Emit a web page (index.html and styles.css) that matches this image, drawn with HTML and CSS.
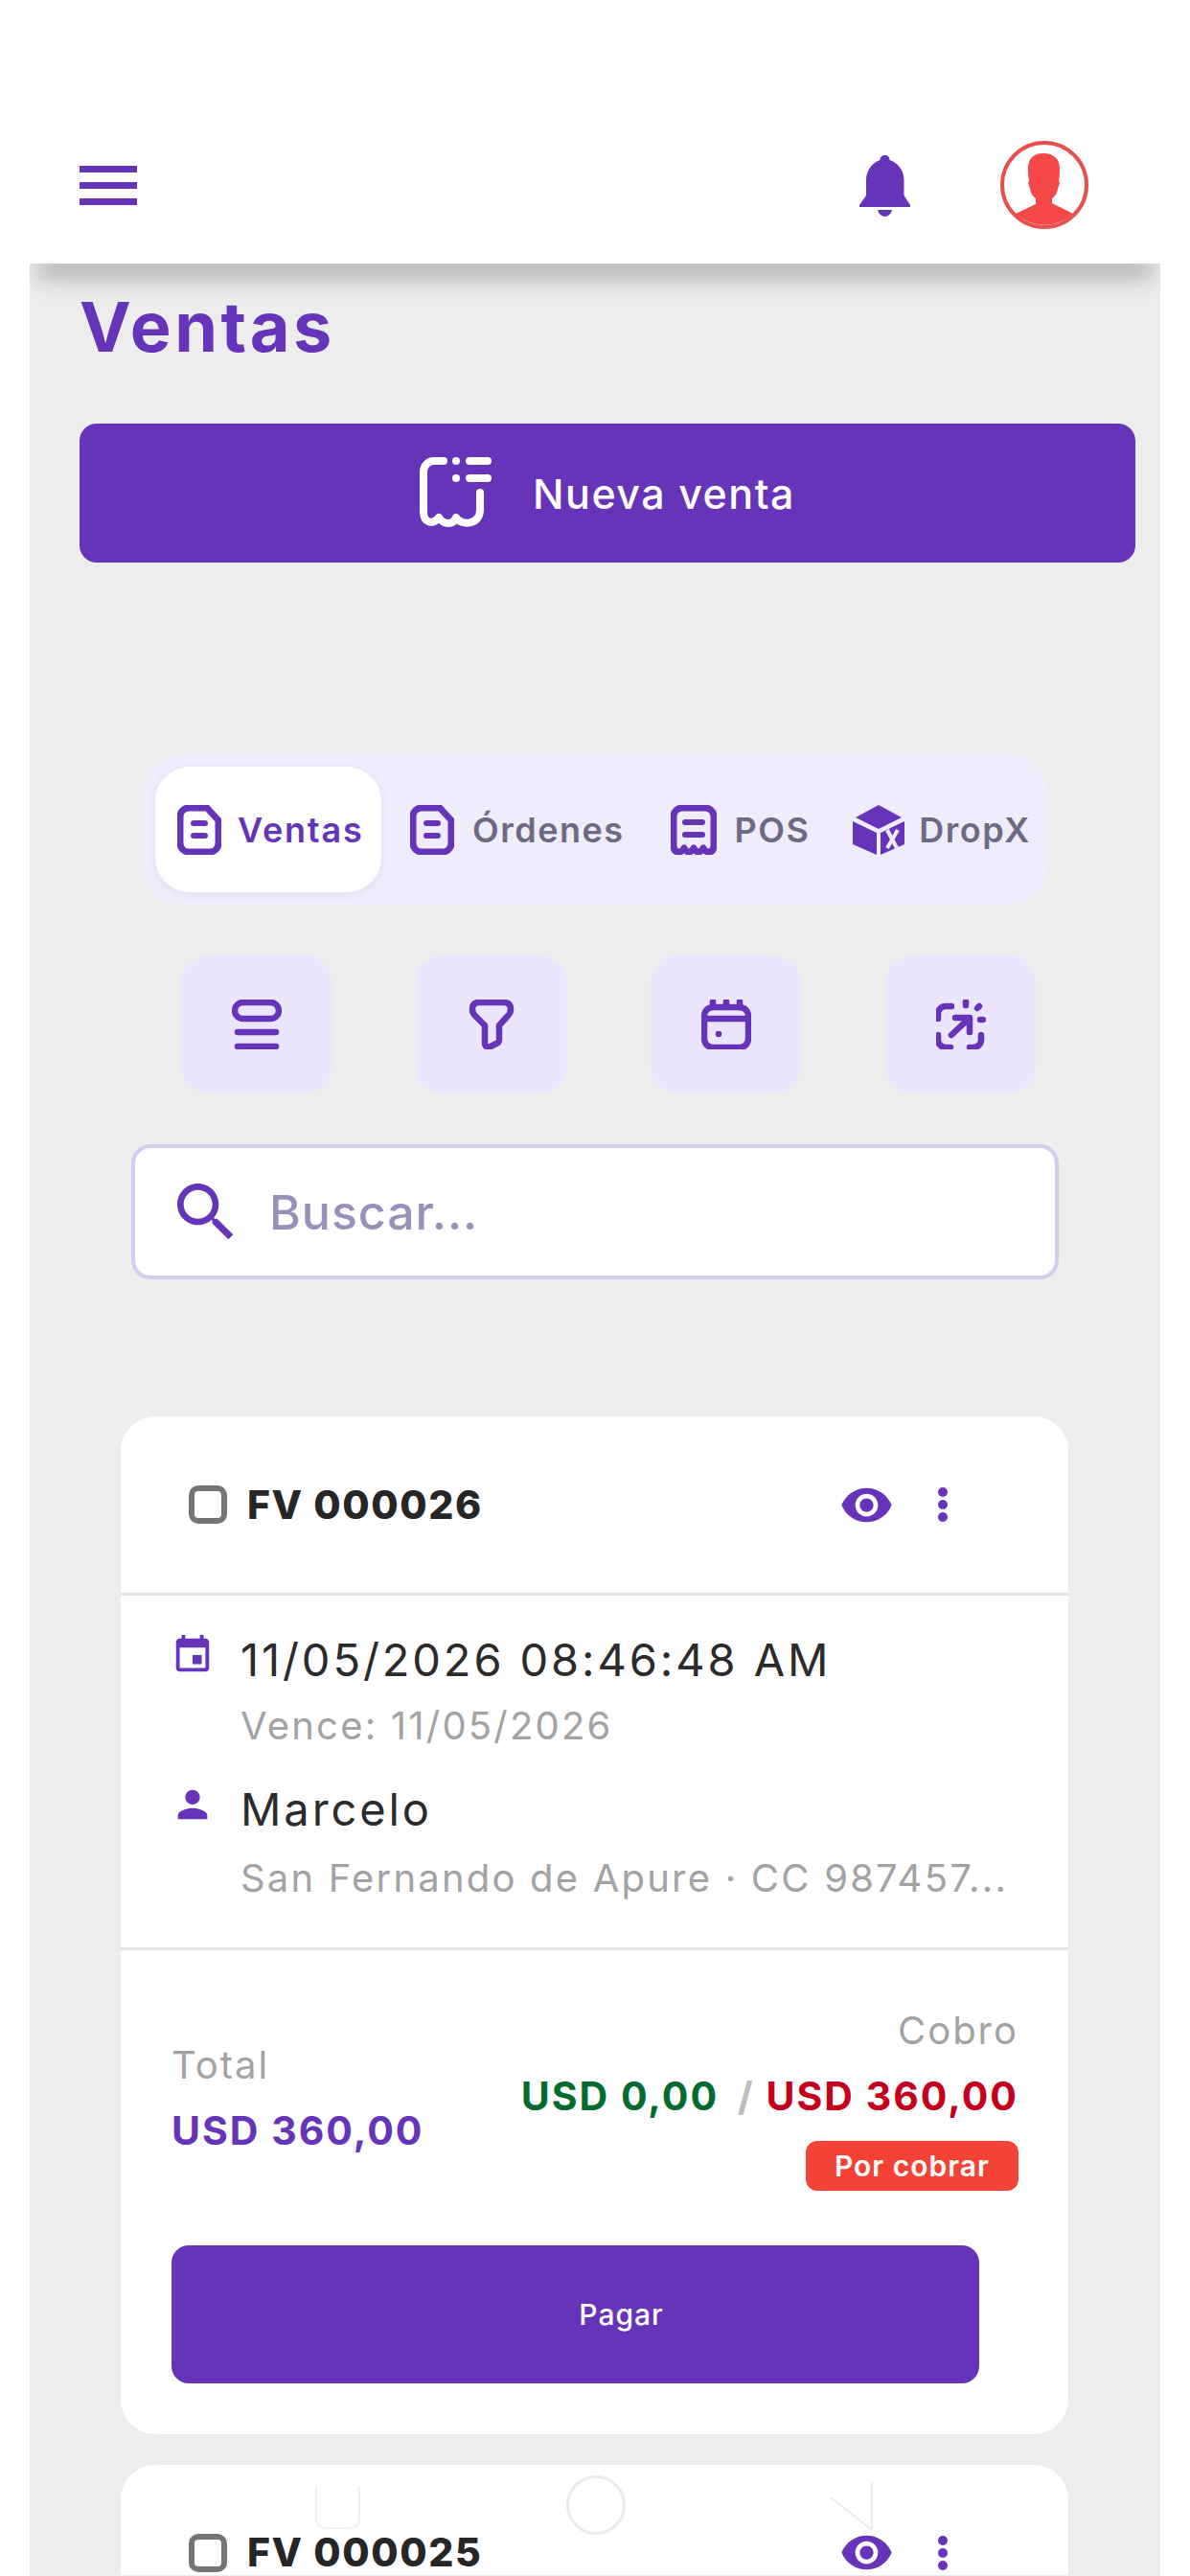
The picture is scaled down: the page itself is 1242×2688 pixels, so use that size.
FILE: index.html
```html
<!DOCTYPE html>
<html lang="es">
<head>
  <meta charset="UTF-8" />
  <meta name="viewport" content="width=device-width, initial-scale=1.0" />
  <title>Ventas</title>
  <link rel="stylesheet" href="styles.css">
</head>
<body>
  <header class="topbar">
    <div class="burger"><span></span><span></span><span></span></div>
    <svg class="bell" viewBox="0 0 53 64"><path d="M26.5 0c3 0 5 2 5 5 9 3 15 11 15 21v16l6.500 10v2H0v-2l7-10V26C7 16 13 8 21.500 5c0-3 2-5 5-5z"/><path d="M19 57h15c-1 4-4 7-7.500 7S20 61 19 57z"/></svg>
    <svg class="avatar" viewBox="0 0 92 92">
      <circle class="avatar-ring" cx="46" cy="46" r="44"/>
      <path class="avatar-man" d="M45 13c11 0 17 6 17 16 0 4 0 8-1 12l1 3-2 6c-1 5-3 8-6 10v5l22 11A44 44 0 0 1 16 76l21-10v-6c-3-2-5-5-6-10l-2-6 1-3c-1-4-1-8-1-12 0-10 5-16 16-16z"/>
    </svg>
  </header>

  <main class="page">
    <div class="bar-shade"></div>
    <h1 class="page-title">Ventas</h1>
    <button class="new-sale">
      <svg class="new-sale-icon" viewBox="0 0 77 75"><path d="M25 5H15A11 11 0 0 0 4 16V58C4 70 14 72 20 64C25 72 35 72 38 64C43 73 63 72 63 56V38"/><path d="M38 5h.01M38 23h.01M52 5h19M52 23h19"/></svg>
      <span>Nueva venta</span>
    </button>

    <nav class="tabs">
      <div class="tab active">
        <svg class="tab-icon" viewBox="0 0 46 52"><path d="M12 3h19l12 13v24a9 9 0 0 1-9 9H12a9 9 0 0 1-9-9V12a9 9 0 0 1 9-9z"/><path class="tab-lines" d="M17 19h12M17 32h12"/></svg>
        <span>Ventas</span>
      </div>
      <div class="tab">
        <svg class="tab-icon" viewBox="0 0 46 52"><path d="M12 3h19l12 13v24a9 9 0 0 1-9 9H12a9 9 0 0 1-9-9V12a9 9 0 0 1 9-9z"/><path class="tab-lines" d="M17 19h12M17 32h12"/></svg>
        <span>Órdenes</span>
      </div>
      <div class="tab">
        <svg class="tab-icon pos" viewBox="0 0 48 52"><path d="M3 12a9 9 0 0 1 9-9h24a9 9 0 0 1 9 9v30Q45 49 39 49 36 49 34 45 32 49 29 49 26 49 24 45 22 49 19 49 16 49 14 45 12 49 9 49 3 49 3 42z"/><path class="tab-lines" d="M15 18h18M15 31h18"/></svg>
        <span>POS</span>
      </div>
      <div class="tab drop">
        <svg class="tab-icon cube" viewBox="0 0 54 52">
          <path d="M27 0l24 13-24 12L3 13zM0 17l25 12v23L0 41zM29 29l25-12v24L29 52z"/>
          <path class="cube-x" d="M36 45l11-19M36 26l10 19"/>
        </svg>
        <span>DropX</span>
      </div>
    </nav>

    <div class="tools">
      <button class="tool"><svg viewBox="0 0 52 52"><rect x="3" y="3" width="46" height="17" rx="8.500"/><path d="M6 34h40M6 49h40"/></svg></button>
      <button class="tool"><svg viewBox="0 0 52 52"><path d="M13 3h26q7 0 7 7 0 4-3 7l-9 10v15q0 3-3 4l-6 3q-6 2-6-4V27L9 17q-3-3-3-7 0-7 7-7z"/></svg></button>
      <button class="tool"><svg viewBox="0 0 52 52"><rect x="3" y="8" width="46" height="42" rx="9"/><path d="M3 20h46M12 2v6M26 2v6M40 2v6M18 36h.01"/></svg></button>
      <button class="tool"><svg viewBox="0 0 52 52"><path d="M16 7h-6a8 8 0 0 0-8 8v5M2 37v5a8 8 0 0 0 8 8h5M35 50h4a8 8 0 0 0 8-8v-5M31 2v4M43 9l2-2M46 21h3M16 37l18-17M20 19h15v15"/></svg></button>
    </div>

    <div class="search">
      <svg class="search-icon" viewBox="0 0 24 24"><path d="M15.500 14h-.79l-.28-.27C15.410 12.590 16 11.110 16 9.500 16 5.910 13.090 3 9.500 3S3 5.910 3 9.500 5.910 16 9.500 16c1.610 0 3.090-.59 4.230-1.570l.27.28v.79l5 4.990L20.490 19l-4.990-5zm-6 0C7.010 14 5 11.990 5 9.500S7.010 5 9.500 5 14 7.010 14 9.500 11.990 14 9.500 14z"/></svg>
      <input type="text" placeholder="Buscar...">
    </div>

    <article class="card">
      <div class="card-head">
        <span class="check"></span>
        <span class="doc-number">FV 000026</span>
        <svg class="eye" viewBox="0 0 24 24"><path d="M12 4.500C7 4.500 2.730 7.610 1 12c1.730 4.390 6 7.500 11 7.500s9.270-3.110 11-7.500c-1.730-4.390-6-7.500-11-7.500zM12 17c-2.760 0-5-2.240-5-5s2.240-5 5-5 5 2.240 5 5-2.240 5-5 5zm0-8c-1.660 0-3 1.340-3 3s1.340 3 3 3 3-1.340 3-3-1.340-3-3-3z"/></svg>
        <svg class="more" viewBox="0 0 10 36"><circle cx="5" cy="5" r="5"/><circle cx="5" cy="18" r="5"/><circle cx="5" cy="31" r="5"/></svg>
      </div>
      <div class="card-info">
        <div class="info-row">
          <svg class="info-icon" viewBox="0 0 24 24"><path d="M17 12h-5v5h5v-5zM16 1v2H8V1H6v2H5c-1.110 0-1.990.9-1.990 2L3 19c0 1.100.89 2 2 2h14c1.100 0 2-.9 2-2V5c0-1.100-.9-2-2-2h-1V1h-2zm3 18H5V8h14v11z"/></svg>
          <div>
            <div class="info-main">11/05/2026 08:46:48 AM</div>
            <div class="info-sub">Vence: 11/05/2026</div>
          </div>
        </div>
        <div class="info-row customer">
          <svg class="info-icon" viewBox="0 0 24 24"><path d="M12 12c2.210 0 4-1.790 4-4s-1.790-4-4-4-4 1.790-4 4 1.790 4 4 4zm0 2c-2.670 0-8 1.340-8 4v2h16v-2c0-2.660-5.330-4-8-4z"/></svg>
          <div>
            <div class="info-main">Marcelo</div>
            <div class="info-sub">San Fernando de Apure · CC 987457...</div>
          </div>
        </div>
      </div>
      <div class="card-foot">
        <div class="amounts">
          <div>
            <div class="label">Total</div>
            <div class="money total">USD 360,00</div>
          </div>
          <div class="collect">
            <div class="label">Cobro</div>
            <div class="money"><span class="paid">USD 0,00</span> <span class="slash">/</span> <span class="due">USD 360,00</span></div>
            <span class="badge">Por cobrar</span>
          </div>
        </div>
        <button class="pay">Pagar</button>
      </div>
    </article>

    <article class="card">
      <div class="card-head">
        <span class="check"></span>
        <span class="doc-number">FV 000025</span>
        <svg class="eye" viewBox="0 0 24 24"><path d="M12 4.500C7 4.500 2.730 7.610 1 12c1.730 4.390 6 7.500 11 7.500s9.270-3.110 11-7.500c-1.730-4.390-6-7.500-11-7.500zM12 17c-2.760 0-5-2.240-5-5s2.240-5 5-5 5 2.240 5 5-2.240 5-5 5zm0-8c-1.660 0-3 1.340-3 3s1.340 3 3 3 3-1.340 3-3-1.340-3-3-3z"/></svg>
        <svg class="more" viewBox="0 0 10 36"><circle cx="5" cy="5" r="5"/><circle cx="5" cy="18" r="5"/><circle cx="5" cy="31" r="5"/></svg>
      </div>
    </article>
  </main>

  <!-- faint system navigation keys lying over the page -->
  <div class="sys-nav">
    <span class="sys-square"></span>
    <span class="sys-circle"></span>
    <svg class="sys-back" viewBox="0 0 46 52"><path d="M45 0v50L2 16"/></svg>
  </div>
</body>
</html>
```

FILE: styles.css
```css
* {
  box-sizing: border-box;
  margin: 0;
  padding: 0;
}
html, body {
  height: 2688px;
  overflow: hidden;
}
body {
  position: relative;
  font-family: 'Inter', 'Noto Sans', sans-serif;
  background: #fff;
  color: #2b2b2b;
}
button {
  font-family: inherit;
  border: none;
}
svg {
  display: block;
  flex: none;
}

/* top bar */
.topbar {
  height: 275px;
  padding: 147px 106px 0 83px;
  display: flex;
  align-items: flex-start;
}
.burger {
  width: 60px;
  margin-top: 26px;
  margin-right: auto;
  display: flex;
  flex-direction: column;
  gap: 10px;
}
.burger span {
  height: 7px;
  background: #6534b8;
}
.bell {
  width: 53px;
  height: 64px;
  margin-top: 15px;
  margin-right: 94px;
  fill: #6534b8;
}
.avatar {
  width: 92px;
  height: 92px;
}
.avatar-ring {
  fill: #fff;
  stroke: #e8504f;
  stroke-width: 4;
}
.avatar-man {
  fill: #f44848;
}

/* page */
.page {
  margin: 0 31px;
  height: 2413px;
  background: #ededee;
  overflow: hidden;
}
.bar-shade {
  height: 0;
  margin: 0 14px;
  box-shadow: 0 4px 26px 6px rgba(0, 0, 0, 0.5);
}
.page-title {
  margin: 24px 0 59px 52px;
  font-size: 72px;
  line-height: 84px;
  font-weight: 700;
  letter-spacing: 3.500px;
  color: #6534b8;
}
.new-sale {
  width: 1102px;
  height: 145px;
  margin-left: 52px;
  display: flex;
  align-items: center;
  justify-content: center;
  gap: 41px;
  background: #6534b8;
  color: #fff;
  border-radius: 18px;
  font-size: 43px;
  font-weight: 500;
  letter-spacing: 1.500px;
}
.new-sale-icon {
  width: 77px;
  height: 75px;
  margin-bottom: 2px;
  fill: none;
  stroke: #fff;
  stroke-width: 8;
  stroke-linecap: round;
  stroke-linejoin: round;
}

/* tabs */
.tabs {
  width: 944px;
  height: 157px;
  margin: 200px 0 0 118px;
  padding: 13px;
  display: flex;
  gap: 26px;
  background: #efecfb;
  border-radius: 40px;
}
.tab {
  flex: none;
  height: 131px;
  padding: 0 11px;
  display: flex;
  align-items: center;
  gap: 19px;
  font-size: 36px;
  font-weight: 600;
  letter-spacing: 1.500px;
  color: #6e6a85;
}
.tab.active {
  width: 236px;
  margin-right: -7px;
  padding: 0 0 0 23px;
  gap: 17px;
  background: #fff;
  border-radius: 36px;
  color: #6534b8;
  letter-spacing: 1.800px;
  box-shadow: 0 2px 8px rgba(101, 52, 184, 0.08);
}
.tab.drop {
  margin-left: -3px;
  gap: 15px;
}
.tab-icon {
  width: 46px;
  height: 52px;
  fill: none;
  stroke: #6534b8;
  stroke-width: 7;
  stroke-linejoin: round;
}
.tab-icon.pos {
  width: 48px;
}
.tab-icon.cube {
  width: 54px;
  fill: #6534b8;
  stroke: none;
}
.tab-lines {
  stroke-width: 6;
  stroke-linecap: round;
}
.cube-x {
  fill: none;
  stroke: #efecfb;
  stroke-width: 4;
}

/* tool buttons */
.tools {
  margin: 53px 0 0 158px;
  display: flex;
  gap: 88px;
}
.tool {
  width: 157px;
  height: 144px;
  display: flex;
  align-items: center;
  justify-content: center;
  background: #ebe6fd;
  border-radius: 28px;
}
.tool svg {
  width: 52px;
  height: 52px;
  fill: none;
  stroke: #6534b8;
  stroke-width: 6.500;
  stroke-linecap: round;
  stroke-linejoin: round;
}

/* search */
.search {
  width: 968px;
  height: 141px;
  margin: 53px 0 0 106px;
  padding-left: 34px;
  display: flex;
  align-items: center;
  gap: 26px;
  background: #fff;
  border: 4px solid #d4cbf0;
  border-radius: 20px;
}
.search-icon {
  width: 80px;
  height: 80px;
  fill: #6534b8;
}
.search input {
  flex: 1;
  min-width: 0;
  border: none;
  outline: none;
  background: transparent;
  font-family: inherit;
  font-size: 50px;
  font-weight: 500;
  letter-spacing: 1px;
}
.search input::placeholder {
  color: #9a8fbb;
  opacity: 1;
}

/* cards */
.card {
  width: 989px;
  margin: 143px 0 0 95px;
  background: #fff;
  border-radius: 36px;
}
.card + .card {
  margin-top: 32px;
  height: 115px;
  border-radius: 36px 36px 0 0;
}
.card-head {
  height: 187px;
  padding: 0 0 0 71px;
  display: flex;
  align-items: center;
  border-bottom: 3px solid #e4e4e4;
}
/* second card runs off the bottom of the screen */
.card + .card .card-head {
  height: 115px;
  padding-top: 68px;
  border-bottom: none;
}
.check {
  width: 40px;
  height: 40px;
  margin-right: 21px;
  border: 6px solid #757575;
  border-radius: 10px;
}
.doc-number {
  font-size: 41px;
  line-height: 41px;
  font-weight: 800;
  letter-spacing: 1.600px;
  color: #262626;
  margin-right: auto;
}
.eye {
  width: 57px;
  height: 57px;
  margin-right: 46px;
  fill: #6534b8;
}
.more {
  width: 10px;
  height: 36px;
  margin-right: 126px;
  fill: #6534b8;
}
.card-info {
  height: 370px;
  padding: 39px 0 0 52px;
  border-bottom: 3px solid #e4e4e4;
}
.info-row {
  display: flex;
  gap: 27px;
  align-items: flex-start;
}
.info-row.customer {
  margin-top: 33px;
}
.info-icon {
  width: 46px;
  height: 46px;
  fill: #6534b8;
}
.info-main {
  font-size: 47px;
  line-height: 56px;
  letter-spacing: 2.900px;
  color: #2b2b2b;
}
.info-sub {
  margin-top: 15px;
  font-size: 40px;
  line-height: 52px;
  letter-spacing: 2.200px;
  color: #a3a3a3;
}
.customer .info-sub {
  margin-top: 18px;
}
.card-foot {
  padding: 0 0 53px 53px;
}
.amounts {
  height: 308px;
  padding-right: 52px;
  display: flex;
  justify-content: space-between;
  align-items: center;
}
.collect {
  text-align: right;
}
.label {
  font-size: 40px;
  line-height: 52px;
  letter-spacing: 2px;
  color: #a3a3a3;
}
.money {
  margin-top: 16px;
  font-size: 41px;
  line-height: 52px;
  font-weight: 700;
  letter-spacing: 2px;
}
.total {
  color: #6534b8;
}
.paid {
  color: #046b2f;
}
.slash {
  margin-left: 8px;
  color: #bdbdbd;
}
.due {
  color: #c4001d;
}
.badge {
  display: inline-block;
  height: 52px;
  margin-top: 21px;
  padding: 0 30px;
  background: #f44336;
  color: #fff;
  border-radius: 12px;
  font-size: 30px;
  line-height: 52px;
  font-weight: 600;
  letter-spacing: 1px;
}
.pay {
  display: block;
  width: 843px;
  height: 144px;
  padding-left: 96px;
  background: #6534b8;
  color: #fff;
  border-radius: 18px;
  font-size: 30px;
  font-weight: 500;
  letter-spacing: 1px;
}

/* system keys */
.sys-nav {
  position: absolute;
  left: 329px;
  top: 2590px;
  display: flex;
  align-items: flex-start;
  pointer-events: none;
}
.sys-square {
  width: 47px;
  height: 45px;
  margin-top: 4px;
  border: 2px solid #f1f1f1;
  border-top: none;
  border-radius: 0 0 10px 10px;
}
.sys-circle {
  width: 62px;
  height: 62px;
  margin: -7px 0 0 215px;
  border: 3px solid #ececec;
  border-radius: 50%;
}
.sys-back {
  width: 46px;
  height: 52px;
  margin-left: 212px;
  fill: none;
  stroke: #ececec;
  stroke-width: 2;
}
```
